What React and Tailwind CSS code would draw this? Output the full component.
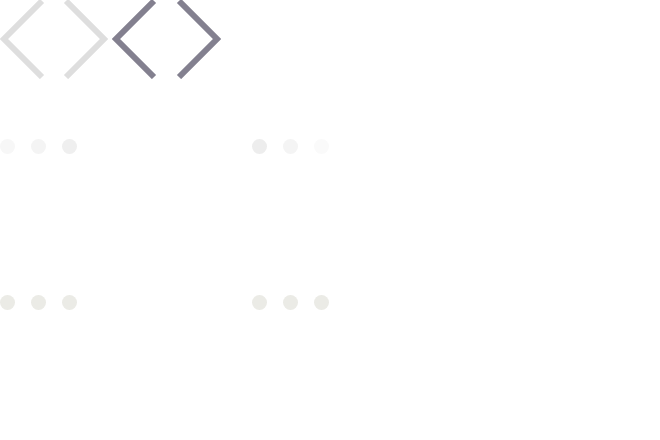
function Chevron({ dir, color }) {
  const points = dir === "left" ? "42,2 4,40 42,78" : "3,2 41,40 3,78";
  return (
    <svg width="45" height="80" viewBox="0 0 45 80" className="block">
      <polyline
        points={points}
        fill="none"
        stroke={color}
        strokeWidth="6"
        strokeLinecap="butt"
        strokeLinejoin="miter"
      />
    </svg>
  );
}

function Dots({ colors }) {
  return (
    <div className="flex gap-[16px]">
      {colors.map((c, i) => (
        <div key={i} className={`w-[15px] h-[15px] rounded-full ${c}`}></div>
      ))}
    </div>
  );
}

export default function App() {
  return (
    <div className="w-[660px] h-[440px] bg-white flex flex-col overflow-hidden">
      {/* Pager arrows */}
      <div className="flex h-[80px] -mt-[1px]">
        <div className="flex w-[112px] gap-[18px]">
          <Chevron dir="left" color="#dedede" />
          <Chevron dir="right" color="#dedede" />
        </div>
        <div className="flex gap-[19px]">
          <Chevron dir="left" color="#83808f" />
          <Chevron dir="right" color="#83808f" />
        </div>
      </div>

      {/* Loading dots */}
      <div className="grid grid-cols-[252px_252px] mt-[60px] gap-y-[141px]">
        <Dots colors={["bg-[#f7f7f7]", "bg-[#f4f4f4]", "bg-[#efefef]"]} />
        <Dots colors={["bg-[#ededed]", "bg-[#f4f4f4]", "bg-[#fafafa]"]} />
        <Dots colors={["bg-[#ebebe6]", "bg-[#ebebe6]", "bg-[#ebebe6]"]} />
        <Dots colors={["bg-[#ebebe6]", "bg-[#ebebe6]", "bg-[#ebebe6]"]} />
      </div>
    </div>
  );
}
